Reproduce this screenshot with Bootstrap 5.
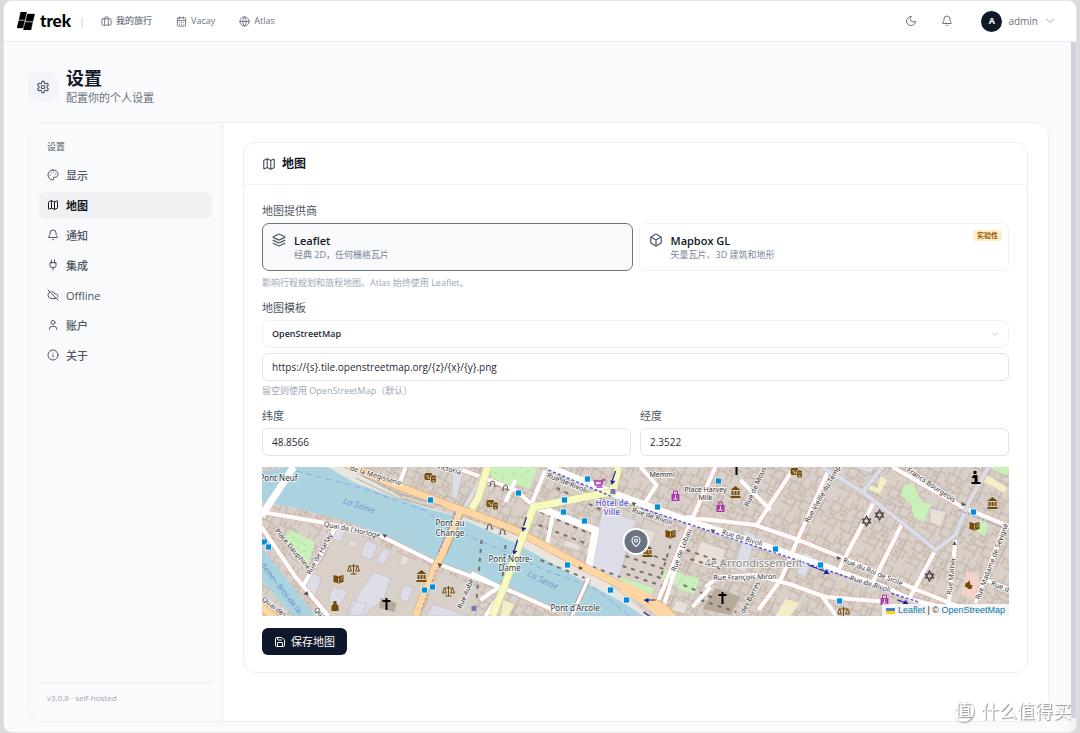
<!DOCTYPE html>
<html lang="zh-CN">
<head>
<meta charset="utf-8">
<meta name="viewport" content="width=device-width, initial-scale=1">
<title>设置 · trek</title>
<link href="https://cdn.jsdelivr.net/npm/bootstrap@5.3.0/dist/css/bootstrap.min.css" rel="stylesheet">
<style>
  :root { --ink:#111827; --slate:#4b5563; --soft:#6b7280; --faint:#9ca8ba; --line:#edeef1; --panel:#f9fafc; }
  body { font-family:"Open Sans","Noto Sans CJK SC",sans-serif; font-size:11px; line-height:16px; color:var(--slate); background:#d9dadc; }
  a { text-decoration:none; color:inherit; }
  .ico { width:12px; height:12px; fill:none; stroke:currentColor; stroke-width:2; stroke-linecap:round; stroke-linejoin:round; flex:none; }
  .ico-lg { width:14px; height:14px; }
  .app-window { margin:0 3px; min-height:calc(100vh - 2px); background:var(--panel); border:1px solid #e4e5e8; border-radius:9px; overflow:hidden; }
  .topbar { height:41px; background:#fff; border-bottom:1px solid var(--line); padding:0 20px 0 13px; }
  .brand { font:900 17px/20px Lato,"Open Sans",sans-serif; color:#000; gap:5px; }
  .topnav { font-size:9px; color:var(--soft); font-weight:500; }
  .topnav .ico { width:11px; height:11px; }
  .latin { font-size:10px; }
  .avatar { width:21px; height:21px; background:var(--ink); color:#fff; font-size:9px; font-weight:700; }
  .plain { border:0; background:none; padding:0; color:var(--soft); }
  .page-area { padding:26px 24px 10px; padding-right:22px; }
  .title-icon { width:30px; height:30px; background:#f1f5f9; border-radius:8px; }
  h1 { font-size:18px; line-height:21px; font-weight:700; color:var(--ink); margin:0; }
  .subtitle { color:var(--soft); line-height:17px; }
  .shell { border:1px solid var(--line); border-radius:14px; background:#fff; overflow:hidden; }
  .side { width:194px; background:var(--panel); border-right:1px solid var(--line); padding:16px 10px 15px; }
  .side-title { font-size:9px; font-weight:500; color:var(--soft); padding:0 8px; margin-bottom:7px; }
  .side .nav-link { height:27px; padding:0 8px; gap:7px; border-radius:6px; color:var(--slate); font-weight:500; }
  .side .nav-link .ico { margin-bottom:2px; }
  .side .nav-link.active { background:#f0f1f3; color:var(--ink); font-weight:700; }
  .version { border-top:1px solid var(--line); font-size:8px; color:var(--faint); padding:7px 8px 0; }
  .stage { padding:19px 20px 48px; min-width:0; }
  .panel-box { border:1px solid var(--line); border-radius:12px; }
  .panel-head { height:42px; border-bottom:1px solid #f1f2f4; padding:0 18px; gap:6px; }
  h2 { font-size:12px; line-height:18px; font-weight:700; color:var(--ink); margin:0; }
  .panel-main { padding:18px 18px 17px; }
  .field-label { display:block; line-height:16px; margin-bottom:4px; }
  .hint { font-size:9px; line-height:12px; color:var(--faint); margin:4px 0 11px; }
  .provider { flex:1 1 0; height:48px; border:1px solid #f0f1f6; border-radius:7px; background:#fff; padding:9px; gap:8px; color:var(--slate); position:relative; text-align:left; }
  .provider.chosen { border-color:#6b7280; background:#f8fafc; }
  .provider strong { display:block; font-size:11px; font-weight:600; line-height:15px; color:var(--ink); }
  .provider small { display:block; font-size:9px; line-height:13px; color:#7a8798; }
  .tag { position:absolute; right:6px; top:6px; font-size:7px; line-height:11px; padding:0 4px; background:#fdefc4; color:#a05a1a; font-weight:700; border-radius:3px; }
  .form-control, .form-select { height:28px; font-size:10px; line-height:16px; padding:0 9px; border-color:#e1e4ed; border-radius:6px; color:#1f2937; }
  .form-select { font-size:9px; font-weight:600; border-color:#f0f1f3; border-radius:8px; background-size:8px; background-position:right 9px center;
    background-image:url("data:image/svg+xml,%3Csvg xmlns='http://www.w3.org/2000/svg' viewBox='0 0 24 24' fill='none' stroke='%239ca3af' stroke-width='2'%3E%3Cpath d='m5 9 7 7 7-7'/%3E%3C/svg%3E"); }
  .map-view { height:149px; margin:11px 0 12px; position:relative; overflow:hidden; background:#d9d0c9; }
  .map-view > svg { width:100%; height:100%; display:block; }
  .credit { position:absolute; right:0; bottom:0; background:rgba(255,255,255,.8); font:9px/12px "Liberation Sans",sans-serif; color:#333; padding:0 4px; }
  .credit a { color:#0078a8; }
  .btn-save { background:#0f172a; color:#fff; height:27px; padding:0 11px; font-size:11px; line-height:16px; border-radius:6px; gap:5px; font-weight:400; }
  .scroll-rail { width:5px; background:#f4f5fa; padding-bottom:14px; }
  .scroll-rail div { background:#cfd2dc; height:100%; }
  .taskmark { width:64px; height:2px; margin-left:264px; background:#8e8f91; }
  .watermark { position:fixed; right:9px; bottom:11px; gap:7px; font-size:18px; line-height:22px; color:#fff; text-shadow:1px 1px 1px #8f8f8f; }
  .watermark span { width:22px; height:22px; border-radius:50%; box-shadow:1px 1px 1px #aaa; font-size:17px; line-height:20px; text-align:center; }
  .lbl { font-family:"Noto Sans",sans-serif; font-size:7px; fill:#333; stroke:#fff; stroke-opacity:.75; stroke-width:2; paint-order:stroke; stroke-linejoin:round; }
  .lbl .big { font-size:8px; }
</style>
</head>
<body>
<svg width="0" height="0" class="position-absolute" aria-hidden="true">
  <symbol id="i-map" viewBox="0 0 24 24"><path d="M14.106 5.553a2 2 0 0 0 1.788 0l3.659-1.83A1 1 0 0 1 21 4.619v12.764a1 1 0 0 1-.553.894l-4.553 2.277a2 2 0 0 1-1.788 0l-4.212-2.106a2 2 0 0 0-1.788 0l-3.659 1.83A1 1 0 0 1 3 19.381V6.618a1 1 0 0 1 .553-.894l4.553-2.277a2 2 0 0 1 1.788 0zM15 5.764v15M9 3.236v15"/></symbol>
  <symbol id="i-bell" viewBox="0 0 24 24"><path d="M10.268 21a2 2 0 0 0 3.464 0M3.262 15.326A1 1 0 0 0 4 17h16a1 1 0 0 0 .74-1.673C19.41 13.956 18 12.499 18 8A6 6 0 0 0 6 8c0 4.499-1.411 5.956-2.738 7.326"/></symbol>
</svg>

<div class="app-window d-flex flex-column">
  <header class="topbar d-flex align-items-center justify-content-between">
    <div class="d-flex align-items-center">
      <a href="#" class="brand d-flex align-items-center" aria-label="trek">
        <svg width="18" height="18" viewBox="0 0 54 54"><path d="M11 0h18l-5 23H6zM31 6h22l-5 22H26zM5 26h18l-5 22H0zM25 31h22l-5 23H19z" stroke="#000" stroke-linejoin="round"/></svg>
        <span>trek</span></a>
      <span class="mx-2 pe-2" style="color:#c3c8d0">|</span>
      <nav class="topnav d-flex gap-4">
        <a href="#" class="d-flex align-items-center gap-1"><svg class="ico" viewBox="0 0 24 24"><path d="M16 20V4a2 2 0 0 0-2-2h-4a2 2 0 0 0-2 2v16"/><rect x="2" y="6" width="20" height="14" rx="2"/></svg>我的旅行</a>
        <a href="#" class="d-flex align-items-center gap-1"><svg class="ico" viewBox="0 0 24 24"><path d="M8 2v4M16 2v4M3 10h18M8 14h.01M12 14h.01M16 14h.01M8 18h.01M12 18h.01M16 18h.01"/><rect x="3" y="4" width="18" height="18" rx="2"/></svg>Vacay</a>
        <a href="#" class="d-flex align-items-center gap-1"><svg class="ico" viewBox="0 0 24 24"><circle cx="12" cy="12" r="10"/><path d="M12 2a14.500 14.500 0 0 0 0 20 14.500 14.500 0 0 0 0-20M2 12h20"/></svg>Atlas</a>
      </nav>
    </div>
    <div class="d-flex align-items-center">
      <button class="plain d-flex me-4" aria-label="深色模式"><svg class="ico" viewBox="0 0 24 24"><path d="M12 3a6 6 0 0 0 9 9 9 9 0 1 1-9-9Z"/></svg></button>
      <button class="plain d-flex me-4" aria-label="通知"><svg class="ico"><use href="#i-bell"/></svg></button>
      <button class="plain d-flex align-items-center ms-1" style="gap:6px"><span class="avatar rounded-circle d-flex align-items-center justify-content-center">A</span><span class="latin">admin</span>
        <svg class="ico" style="color:#9ca3af" viewBox="0 0 24 24"><path d="m5 8 7 7 7-7"/></svg></button>
    </div>
  </header>

  <div class="d-flex flex-grow-1">
    <main class="page-area flex-grow-1 d-flex flex-column">
      <div class="d-flex align-items-center mb-3">
        <div class="title-icon d-flex align-items-center justify-content-center me-2"><svg class="ico ico-lg" viewBox="0 0 24 24"><path d="M12.220 2h-.44a2 2 0 0 0-2 2v.18a2 2 0 0 1-1 1.730l-.43.25a2 2 0 0 1-2 0l-.15-.08a2 2 0 0 0-2.730.73l-.22.38a2 2 0 0 0 .73 2.730l.15.1a2 2 0 0 1 1 1.720v.51a2 2 0 0 1-1 1.740l-.15.09a2 2 0 0 0-.73 2.730l.22.38a2 2 0 0 0 2.730.73l.15-.08a2 2 0 0 1 2 0l.43.25a2 2 0 0 1 1 1.730V20a2 2 0 0 0 2 2h.44a2 2 0 0 0 2-2v-.18a2 2 0 0 1 1-1.730l.43-.25a2 2 0 0 1 2 0l.15.08a2 2 0 0 0 2.730-.73l.22-.39a2 2 0 0 0-.73-2.730l-.15-.08a2 2 0 0 1-1-1.740v-.5a2 2 0 0 1 1-1.740l.15-.09a2 2 0 0 0 .73-2.730l-.22-.38a2 2 0 0 0-2.730-.73l-.15.08a2 2 0 0 1-2 0l-.43-.25a2 2 0 0 1-1-1.730V4a2 2 0 0 0-2-2z"/><circle cx="12" cy="12" r="3"/></svg></div>
        <div><h1>设置</h1><div class="subtitle">配置你的个人设置</div></div>
      </div>

      <div class="shell d-flex flex-grow-1">
        <aside class="side d-flex flex-column flex-shrink-0">
          <div class="side-title">设置</div>
          <nav class="nav flex-column" style="gap:3px">
            <a class="nav-link d-flex align-items-center" href="#"><svg class="ico" viewBox="0 0 24 24"><path d="M12 2C6.500 2 2 6.500 2 12s4.500 10 10 10c.926 0 1.648-.746 1.648-1.688 0-.437-.18-.835-.437-1.125-.29-.289-.438-.652-.438-1.125a1.640 1.640 0 0 1 1.668-1.668h1.996c3.051 0 5.555-2.503 5.555-5.554C21.965 6.012 17.461 2 12 2zM13.500 6.500h.01M17.500 10.500h.01M8.500 7.500h.01M6.500 12.500h.01"/></svg>显示</a>
            <a class="nav-link active d-flex align-items-center" href="#"><svg class="ico"><use href="#i-map"/></svg>地图</a>
            <a class="nav-link d-flex align-items-center" href="#"><svg class="ico"><use href="#i-bell"/></svg>通知</a>
            <a class="nav-link d-flex align-items-center" href="#"><svg class="ico" viewBox="0 0 24 24"><path d="M12 22v-5M9 8V2M15 8V2M18 8v5a4 4 0 0 1-4 4h-4a4 4 0 0 1-4-4V8Z"/></svg>集成</a>
            <a class="nav-link d-flex align-items-center" href="#"><svg class="ico" viewBox="0 0 24 24"><path d="m2 2 20 20M5.782 5.782A7 7 0 0 0 9 19h8.500a4.500 4.500 0 0 0 1.307-.193M21.532 16.500A4.500 4.500 0 0 0 17.500 10h-1.790A7.008 7.008 0 0 0 10 5.070"/></svg>Offline</a>
            <a class="nav-link d-flex align-items-center" href="#"><svg class="ico" viewBox="0 0 24 24"><path d="M19 21v-2a4 4 0 0 0-4-4H9a4 4 0 0 0-4 4v2"/><circle cx="12" cy="7" r="4"/></svg>账户</a>
            <a class="nav-link d-flex align-items-center" href="#"><svg class="ico" viewBox="0 0 24 24"><circle cx="12" cy="12" r="10"/><path d="M12 16v-4M12 8h.01"/></svg>关于</a>
          </nav>
          <div class="version mt-auto">v3.0.8 · self-hosted</div>
        </aside>

        <section class="stage flex-grow-1">
          <div class="panel-box">
            <div class="panel-head d-flex align-items-center"><svg class="ico ico-lg"><use href="#i-map"/></svg><h2>地图</h2></div>
            <form class="panel-main" onsubmit="return false">
              <div class="field-label" id="provider-label">地图提供商</div>
              <div class="d-flex" style="gap:6px" role="group" aria-labelledby="provider-label">
                <button type="button" class="provider chosen d-flex" aria-pressed="true"><svg class="ico ico-lg" viewBox="0 0 24 24"><path d="M12.830 2.180a2 2 0 0 0-1.660 0L2.600 6.080a1 1 0 0 0 0 1.830l8.580 3.910a2 2 0 0 0 1.660 0l8.580-3.900a1 1 0 0 0 0-1.830ZM22 17.650l-9.170 4.160a2 2 0 0 1-1.660 0L2 17.650M22 12.650l-9.170 4.160a2 2 0 0 1-1.660 0L2 12.650"/></svg><span><strong>Leaflet</strong><small>经典 2D，任何栅格瓦片</small></span></button>
                <button type="button" class="provider d-flex" aria-pressed="false"><svg class="ico ico-lg" viewBox="0 0 24 24"><path d="M21 8a2 2 0 0 0-1-1.730l-7-4a2 2 0 0 0-2 0l-7 4A2 2 0 0 0 3 8v8a2 2 0 0 0 1 1.730l7 4a2 2 0 0 0 2 0l7-4A2 2 0 0 0 21 16ZM3.300 7l8.700 5 8.700-5M12 22V12"/></svg><span><strong>Mapbox GL</strong><small>矢量瓦片、3D 建筑和地形</small></span><span class="tag">实验性</span></button>
              </div>
              <div class="hint" style="margin-top:6px">影响行程规划和旅程地图。Atlas 始终使用 Leaflet。</div>
              <label class="field-label" for="tpl">地图模板</label>
              <select class="form-select" id="tpl" style="margin-bottom:5px"><option>OpenStreetMap</option></select>
              <input class="form-control" aria-label="地图模板 URL" value="https://{s}.tile.openstreetmap.org/{z}/{x}/{y}.png">
              <div class="hint">留空则使用 OpenStreetMap（默认）</div>
              <div class="d-flex" style="gap:9px">
                <div class="flex-fill"><label class="field-label" for="lat">纬度</label><input class="form-control" id="lat" value="48.8566"></div>
                <div class="flex-fill"><label class="field-label" for="lng">经度</label><input class="form-control" id="lng" value="2.3522"></div>
              </div>

              <div class="map-view">
                <svg viewBox="261 467 748 149" preserveAspectRatio="xMidYMid slice" role="img" aria-label="巴黎市中心地图">
                  <defs>
                    <pattern id="lots" width="46" height="38" patternUnits="userSpaceOnUse" patternTransform="rotate(26)">
                      <path fill="none" stroke="#b3a294" stroke-width=".7" d="M0 9h12V0M12 9l9 2V0M21 7h10V0M31 5h8v7h7M12 9v9H0M12 14h8v8h9V7M29 14h10v9h7M39 12v11M0 26h9v-8M9 24h11v-2M20 22v9h10v-8h9M0 32h14v-8M14 32v6M24 31v7M30 31h9v-8M39 31v7M3 9v9M25 14h4M6 0v9M35 14v9M5 26v6M17 11v3M43 23v8M34 31v7M26 0v7"/>
                      <path fill="#c9bdb3" d="M14 16h4v4h-4zM33 16h4v3h-4zM4 20h3v4H4zM33 25h4v4h-4zM23 2h4v3h-4z"/>
                    </pattern>
                    <g id="streets" fill="none" stroke-linejoin="round">
                      <path d="M293 467 261 516M261 512l64 11 53 12 57 28 80 30 40 18M261 527l34 50 33 39M335 527l-33 60M405 467l-5 14M462 470l53 20 17 15 63 25-8 43M548 467l64 26 73 27 70 23 80 27 50 17 27 13 43 10 60 12M588 578l-16 38M715 467l-27 60-33 80M792 470l-37 57M828 470l-31 70-17 40-22 30M685 517l70 8 43 15 57 23 57 25 50 20M892 467l70 40 48 20M873 503l-35 67M902 523l-30 60M935 550l-27 50M955 540l-8 76M1005 523l-30 80M705 587l13-10 37-2 37 10 33 12 63 5M988 467l-20 36"/>
                      <path stroke-width="4" d="M640 467l16 18-16 25M740 480l30 30M660 616l28-89M545 470l-14 34M553 512l-7 35M515 480l-10 22M471 573l32 16-18 27M480 600l20-14M692 607l18-20M822 597l14 19M985 580l24 9"/>
                    </g>
                    <g id="lanes" fill="none"><path d="M822 467l40 25 40 31 33 27 20-15 13-32 20-36M485 470l-22 40M862 492l20-25"/></g>
                    <g id="bus"><rect x="-3" y="-3" width="6" height="6" fill="#0090d6" stroke="#fff" stroke-width=".7"/></g>
                    <g id="mus" fill="#734a08"><path d="m-5-2 5-4 5 4zM-5 4H5v2H-5zM-4-1h2v4h-2zM-1-1h2v4h-2zM2-1h2v4H2z"/></g>
                    <g id="book" fill="#734a08"><path d="M-5-4-1-3 0-2 1-3 5-4V3L1 4 0 5-1 4-5 3z"/><path d="M0-1v5M2-1l2-1M2 1l2-1" stroke="#e8dcc8" stroke-width=".7"/></g>
                    <g id="law" fill="none" stroke="#734a08"><path d="M0-5V5M-3 5H3M-5-3H5M-4-3l-2 5h4zM4-3l-2 5h4z"/></g>
                    <g id="mask" fill="#734a08"><rect x="-6" y="-5" width="8" height="7" rx="2"/><rect x="0" y="-3" width="6" height="8" rx="2" stroke="#eee" stroke-width=".7"/><path d="M-4-2h2M2 0h1M4 0h1M-3 0h2M2 3h2" stroke="#fff" fill="none"/></g>
                    <g id="cross" stroke="#000" stroke-width="2"><path d="M0-6V6M-4-3H4"/></g>
                    <g id="star" fill="none" stroke="#4a4545" stroke-width="1.200"><path d="m0-5 4 7h-8zM0 5l4-7h-8z"/></g>
                    <g id="shop" fill="#ac39ac"><path d="M-4-2h8v7h-8z"/><path d="M-2-2v-3h4v3" fill="none" stroke="#ac39ac"/><path d="M-2 3h4M0-1v3" stroke="#fff"/></g>
                    <g id="arch" fill="none" stroke="#666" stroke-width="1.200"><path d="M-4 2h2v-2c0-4 4-4 4 0v2h2"/></g>
                  </defs>
                  <rect x="261" y="467" width="748" height="149" fill="#d9d0c9"/>
                  <rect x="261" y="467" width="748" height="149" fill="url(#lots)"/>
                  <!-- island blocks are larger and undivided -->
                  <path fill="#d9d0c9" d="m340 527 90 40-15 49h-85l-22-30zM440 572l40 16-14 28h-45zM645 520l38 14-28 70-45-14z"/>
                  <!-- river -->
                  <path fill="#e9e5df" d="M300 467h45l60 33 65 20 60 20 60 30 60 46h-30l-60-30-60-33-160-60z"/>
                  <path fill="#aad3df" d="M290 467h37l28 16 40 15 37 12 20 5 63 28 75 42 33 18 20 13h-68l-43-13-40-15-48-22-32-16-31-15-42-16-48-12-51-8-9-22zM261 547l54 69h-23l-31-36z"/>
                  <path fill="none" stroke="#7e9de8" stroke-width=".8" stroke-dasharray="6 4" d="M296 471l65 17 65 23 20 16 60 25 38 18 50 18 35 28M261 562l40 54"/>
                  <!-- green spaces -->
                  <path fill="#c8f0b8" d="m283 538 8-7 24 11-8 24zM488 467h26v20l-22-5zM507 467h30l-8 22-22-8zM682 575l17 3-5 16-17-5zM619 577l34 11-2 7-34-10zM903 485l10-1 8 18 10 2-8 18-10-5-2-13-10-8zM978 520l10 3-3 13-8-4zM986 467h23v9zM665 570l18 3-6 12-17-5z"/>
                  <path fill="#85c96f" stroke="none" d="M292 537h1v1h-1zM298 541h1v1h-1zM304 544h1v1h-1zM297 548h1v1h-1zM303 551h1v1h-1zM495 472h1v1h-1zM502 478h1v1h-1zM513 472h1v1h-1zM520 477h1v1h-1zM527 471h1v1h-1z"/>
                  <!-- squares and courtyards -->
                  <g fill="#dddde8" stroke="#bbb4b8" stroke-width=".5">
                    <path d="m602 510 33 10-18 63-30-10zM334 527l11 3-5 12-10-4zM366 540l11 5-6 15-11-5zM383 548l7 3-6 14-8-4zM374 572l16 6-7 22-11 7-9 9h-15l12-26zM332 587l16 4-9 14-11-4zM352 600l14 4-5 12h-14zM403 585l10 3-6 14-8-3zM433 604l35 12h-42zM309 572l12 5-8 24-9-6zM452 473l8-6h4l-8 33-5-3zM744 530l11 5-10 38-11-5zM850 467h25l-5 6zM804 552l9 5-8 20-9-4z"/>
                    <path d="m350 540 7 3-3 5-7-3zM402 555l7 3-4 8-6-3zM485 480l10 4-5 8zM700 541l26 9-9 20-25-7zM642 528l14 4-7 14-12-5zM565 540l15 5-2 6-15-5zM676 600l12 4-4 10-13-4zM930 508l16 4-6 15-11-5z" fill="#e8e0d8"/>
                  </g>
                  <path fill="#f2efc6" d="m880 476 7 4-8 14-12-5 2-4 8 3zM985 474l22 14-3 5-22-12zM785 599l14 4-9 13h-15zM503 600l11 4-6 12h-8z"/>
                  <path fill="#f3d3c8" d="m966 571 13 5-4 23-14-4z"/>
                  <path fill="#b7a99b" d="m715 588 25 9-10 18-28-6zM380 598l16 5-2 9-15-4z"/>
                  <g fill="none" stroke="#77706c" stroke-width="2" stroke-dasharray="4 5"><path d="M558 478l45 22M556 488l45 22M540 512l50 22M538 525l46 18M628 547l52 18M625 556l50 17M622 566l48 15M626 574l42 14M686 550l38 13M690 559l32 10M683 585l30 13M670 545l-9 30M592 567l28 10M540 560l44 18M700 600l36 12M481 540l-5 60M505 545l-4 45M480 478l28 12"/></g>
                  <use href="#streets" stroke="#f7aaa3" stroke-width="6" stroke-dasharray="2 2"/>
                  <use href="#streets" stroke="#fff" stroke-width="4"/>
                  <use href="#lanes" stroke="#bdb8c0" stroke-width="5"/><use href="#lanes" stroke="#dddde8" stroke-width="4"/>
                  <g fill="none" stroke-linejoin="round">
                    <path stroke="#fff" stroke-width="7" d="M293 467l-32 49M548 467l64 26 73 27 70 23 80 27M532 505l63 25-8 43"/>
                    <path stroke="#9c8f84" stroke-width="9" d="M460 510l-18 43"/>
                    <path stroke="#dda461" stroke-width="8" d="M338 461l57 24 60 23 13 4 47 18 70 38 50 24 27 15 15 15M460 510l-18 43-7 14-20 49M257 604l20 16"/>
                    <path stroke="#fcd6a4" stroke-width="7" d="M338 461l57 24 60 23 13 4 47 18 70 38 50 24 27 15 15 15M460 510l-18 43-7 14-20 49M257 604l20 16"/>
                    <path stroke="#fcd6a4" stroke-width="12" d="M622 587l20 10 25 19"/>
                    <path stroke="#c9cc8d" stroke-width="8" d="M487 467l-9 30-7 12M618 467l-6 25-79 15-11 30-17 46-13 33"/>
                    <path stroke="#f7fabf" stroke-width="7" d="M487 467l-9 30-7 12M618 467l-6 25-79 15-11 30-17 46-13 33"/>
                    <path stroke="#5a54d8" stroke-width="1.500" stroke-dasharray="3 2" d="M548 470l62 26M640 508l120 40 75 25 55 20 28 9"/>
                    <path stroke="#8b86dd" stroke-dasharray="3 2" d="M455 513l-18 42M958 510l50 20M421 610l16-43"/>
                    <path stroke="#999" stroke-width=".7" d="M360 475l40 19 42 12M355 478l42 20 36 10M590 580l-17 36M585 580l-16 36"/>
                    <path stroke="#181ea0" stroke-width="1.200" d="m615 471-3 9M526 517l-3 9M517 540l-3 10M808 565l18 7M655 600h-9M643 612l7 5M897 600l9 3"/>
                  </g>
                  <g fill="#181ea0"><path d="m610 480 5 1-4 4zM521 527l5 1-4 4zM512 550l5 1-4 4zM826 570l3 4-6 0zM648 598v5l-5-3zM905 600l3 4-6 0z"/></g>
                  <g fill="#555"><path d="m382 534 5 1-3 3zM437 563l5 1-3 4zM303 594l5 2-1-5zM578 566l5 2-4 2zM631 502l5 1-3 3zM710 529l5 1-3 3zM836 556l5 2-4 2zM961 502l5 3-5 1zM952 545l2-4 2 4z"/></g>
                  <g class="lbl">
                    <g class="big"><text x="259" y="481">Pont Neuf</text><text x="435" y="526">Pont au</text><text x="435" y="536">Change</text><text x="488" y="562">Pont Notre-</text><text x="498" y="571">Dame</text><text x="550" y="611">Pont d'Arcole</text></g>
                    <text x="649" y="477">Memmi</text><text x="684" y="492">Place Harvey</text><text x="698" y="500">Milk</text>
                    <text transform="translate(349 470) rotate(17)">de la Mégisserie</text>
                    <text transform="translate(323 526) rotate(12)">Quai de l'Horloge</text>
                    <text transform="translate(274 531) rotate(50)">Place Dauphine</text>
                    <text transform="translate(310 575) rotate(-61)">Rue de Harlay</text>
                    <text transform="translate(313 610) rotate(45)">Quai</text><text transform="translate(261 600) rotate(38)">Quai des</text>
                    <text transform="translate(461 609) rotate(-67)">Rue Aubé</text>
                    <text transform="translate(436 468) rotate(16)">Victoria</text>
                    <text transform="translate(546 477) rotate(22)">Rue de Rivoli</text><text transform="translate(631 512) rotate(18)">Rue de Rivoli</text><text transform="translate(721 534) rotate(17)">Rue de Rivoli</text><text transform="translate(849 580) rotate(17)">Rue de Rivoli</text>
                    <text transform="translate(675 572) rotate(-69)">Rue de Lobau</text>
                    <text transform="translate(713 580) rotate(-1)">Rue François Miron</text>
                    <text transform="translate(744 614) rotate(-63)">des Barres</text>
                    <text transform="translate(748 507) rotate(-65)">Rue de Moussy</text>
                    <text transform="translate(808 523) rotate(-60)">Rue Vieille du Temple</text>
                    <text transform="translate(842 562) rotate(22)">Rue du Roi de Sicile</text>
                    <text transform="translate(906 471) rotate(34)">Francs Bourgeois</text>
                    <text transform="translate(951 595) rotate(-84)">Rue Malher</text>
                    <text transform="translate(979 600) rotate(-69)">Rue Madame de Sévigné</text>
                    <text transform="translate(990 585) rotate(22)">Rue de</text>
                  </g>
                  <g font-family="Noto Sans, sans-serif" fill="#6f9fcc" font-style="italic" font-size="9"><text transform="translate(342 503) rotate(19)">La Seine</text><text transform="translate(526 576) rotate(25)">La Seine</text><text font-size="8" transform="translate(260 566) rotate(52)">Seine - Bras de la</text></g>
                  <g font-family="Noto Sans, sans-serif"><text x="704" y="567" font-size="11" fill="#888" stroke="#fff" stroke-opacity=".7" stroke-width="2" paint-order="stroke">4e Arrondissement</text>
                  <g font-size="8" font-weight="600" fill="#6667d2" stroke="#fff" stroke-opacity=".8" stroke-width="2" paint-order="stroke"><text x="595" y="506">Hôtel de</text><text x="603" y="515">Ville</text></g></g>
                  <use href="#bus" x="430" y="500"/><use href="#bus" x="264" y="542"/><use href="#bus" x="268" y="547"/><use href="#bus" x="424" y="590"/><use href="#bus" x="432" y="587"/><use href="#bus" x="518" y="493"/><use href="#bus" x="587" y="479"/><use href="#bus" x="564" y="500"/><use href="#bus" x="563" y="512"/><use href="#bus" x="584" y="521"/><use href="#bus" x="657" y="507"/><use href="#bus" x="718" y="481"/><use href="#bus" x="567" y="565"/><use href="#bus" x="610" y="590"/><use href="#bus" x="626" y="600"/><use href="#bus" x="775" y="549"/><use href="#bus" x="820" y="565"/><use href="#bus" x="839" y="601"/><use href="#bus" x="973" y="512"/>
                  <path fill="#7a75b5" d="M610 489h5v5h-5zM471 606h5v5h-5z"/>
                  <use href="#mask" x="430" y="478"/><use href="#mask" x="492" y="505"/><use href="#mask" x="796" y="473"/>
                  <use href="#law" x="353" y="569"/><use href="#law" x="448" y="591"/><use href="#law" x="843" y="612"/>
                  <use href="#mus" x="421" y="576"/><use href="#mus" x="735" y="492"/><use href="#mus" x="992" y="503"/><use href="#mus" x="647" y="551"/>
                  <use href="#book" x="338" y="579"/><use href="#book" x="670" y="534"/><use href="#book" x="974" y="526"/>
                  <use href="#cross" x="386" y="604"/><use href="#cross" x="722" y="598"/><use href="#cross" x="736" y="469"/>
                  <use href="#star" x="866" y="521"/><use href="#star" x="879" y="515"/><use href="#star" x="929" y="576"/>
                  <use href="#shop" x="675" y="496"/><use href="#shop" x="720" y="507"/><use href="#shop" x="884" y="600"/>
                  <use href="#arch" x="492" y="484"/><use href="#arch" x="505" y="488"/><use href="#arch" x="489" y="527"/><use href="#arch" x="502" y="532"/>
                  <path d="M605 480h-3l-1 5h-6l-1-4h8M596 487h6" stroke="#ac39ac" stroke-width="1.500" fill="none"/>
                  <path d="M331 611v-5l2-2h3l2 2v5zM333 601h3v3h-3zM967 588l-3-2 2-4 1 1 2-3 1 5 2 0-1 4-3 0z" fill="#734a08"/>
                  <path d="M973 475h4v7h3v2h-9v-2h3v-4h-3zM973 471h3v3h-3z" fill="#000"/>
                  <circle cx="635.500" cy="541.500" r="12.500" fill="#6b7280" stroke="#fff" stroke-width="2"/>
                  <g transform="translate(629.500 535.500) scale(.5)" fill="none" stroke="#fff" stroke-width="2.200"><path d="M20 10c0 4.993-5.539 10.193-7.399 11.799a1 1 0 0 1-1.202 0C9.539 20.193 4 14.993 4 10a8 8 0 0 1 16 0"/><circle cx="12" cy="10" r="3"/></g>
                </svg>
                <div class="credit"><svg width="9" height="6" viewBox="0 0 12 8"><path fill="#4c7be1" d="M0 0h12v4H0z"/><path fill="#ffd500" d="M0 4h12v4H0z"/></svg> <a href="#">Leaflet</a> | © <a href="#">OpenStreetMap</a></div>
              </div>
              <button type="submit" class="btn btn-save d-inline-flex align-items-center"><svg class="ico" viewBox="0 0 24 24"><path d="M15.200 3a2 2 0 0 1 1.400.6l3.800 3.800a2 2 0 0 1 .6 1.400V19a2 2 0 0 1-2 2H5a2 2 0 0 1-2-2V5a2 2 0 0 1 2-2zM17 21v-7a1 1 0 0 0-1-1H8a1 1 0 0 0-1 1v7M7 3v4a1 1 0 0 0 1 1h7"/></svg>保存地图</button>
            </form>
          </div>
        </section>
      </div>
    </main>
    <div class="scroll-rail"><div></div></div>
  </div>
</div>
<div class="taskmark"></div>
<div class="watermark d-flex align-items-center"><span>值</span>什么值得买</div>
<script src="https://cdn.jsdelivr.net/npm/bootstrap@5.3.0/dist/js/bootstrap.bundle.min.js"></script>
</body>
</html>
